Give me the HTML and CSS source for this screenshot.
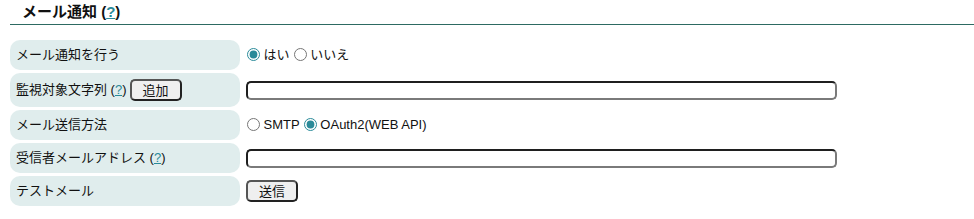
FILE: index.html
```html
<!DOCTYPE html>
<html lang="ja">
<head>
<meta charset="utf-8">
<title>メール通知</title>
<link rel="stylesheet" href="styles.css">
</head>
<body>
<div class="page">
  <h2 class="section-title">メール通知 (<a href="#" class="help">?</a>)</h2>
  <div class="form-grid">
    <div class="label-cell">メール通知を行う</div>
    <div class="value-cell">
      <label class="opt"><input type="radio" name="notify" checked> はい</label>
      <label class="opt"><input type="radio" name="notify"> いいえ</label>
    </div>

    <div class="label-cell">監視対象文字列&nbsp;(<a href="#" class="help">?</a>)<button class="btn btn-inline" type="button">追加</button></div>
    <div class="value-cell"><input class="text-input" type="text"></div>

    <div class="label-cell">メール送信方法</div>
    <div class="value-cell">
      <label class="opt"><input type="radio" name="method"> SMTP</label>
      <label class="opt"><input type="radio" name="method" checked> OAuth2(WEB API)</label>
    </div>

    <div class="label-cell">受信者メールアドレス&nbsp;(<a href="#" class="help">?</a>)</div>
    <div class="value-cell"><input class="text-input" type="text"></div>

    <div class="label-cell">テストメール</div>
    <div class="value-cell"><button class="btn btn-cell" type="button">送信</button></div>
  </div>
</div>
</body>
</html>
```

FILE: styles.css
```css
html, body {
  margin: 0;
  padding: 0;
  background: #ffffff;
}

body {
  font-family: "Liberation Sans", "Noto Sans CJK JP", Arial, sans-serif;
  font-size: 13px;
  color: #111;
}

.page {
  padding-left: 10px;
}

.section-title {
  margin: 0;
  height: 24px;
  padding-left: 12px;
  font-size: 15px;
  font-weight: bold;
  line-height: 24px;
  border-bottom: 1px solid #2d6a62;
}

.help {
  color: #2a8a99;
  text-decoration: underline;
}

.form-grid {
  display: grid;
  grid-template-columns: 230px 1fr;
  column-gap: 2px;
  row-gap: 3px;
  margin-top: 15px;
}

.label-cell {
  background: #e0eded;
  border-radius: 10px;
  padding: 6px 6px;
  min-height: 18px;
  line-height: 18px;
  display: flex;
  align-items: center;
}

.value-cell {
  display: flex;
  align-items: center;
  white-space: pre;
}

.opt {
  display: inline-block;
  line-height: 18px;
}

.opt + .opt {
  margin-left: 4px;
}

.opt input[type="radio"] {
  margin: 0 0 0 5px;
  width: 13px;
  height: 13px;
  vertical-align: -2px;
  accent-color: #2a8a99;
}

.opt + .opt input[type="radio"] {
  margin-left: 0;
}

.text-input {
  box-sizing: border-box;
  margin: 0 0 0 4px;
  width: 591px;
  height: 19px;
  border-style: solid;
  border-width: 2px;
  border-color: #1f1f1f #7a7a7a #7a7a7a #1f1f1f;
  border-radius: 5px;
  padding: 0 4px;
  background: #fff;
}

.btn {
  box-sizing: border-box;
  width: 52px;
  height: 22px;
  padding: 0;
  background: #efefef;
  border: 2px solid;
  border-color: #555 #222 #222 #555;
  border-radius: 5px;
  font-family: "Noto Sans CJK JP", sans-serif;
  font-size: 13px;
  line-height: 18px;
  color: #111;
}

.btn-inline {
  margin-left: 3px;
}

.btn-cell {
  margin-left: 4px;
}
```
